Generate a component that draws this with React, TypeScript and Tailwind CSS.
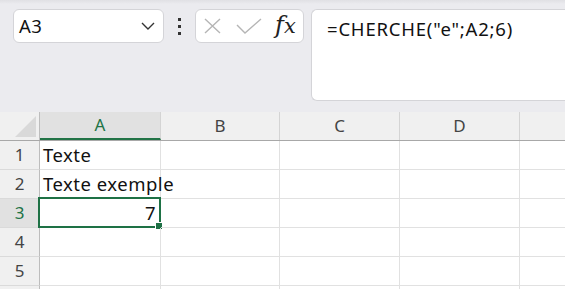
import React from "react";

const font = { fontFamily: '"Noto Sans", "Open Sans", sans-serif' };

const cols = [
  { name: "A", w: "w-[121px]" },
  { name: "B", w: "w-[119px]" },
  { name: "C", w: "w-[120px]" },
  { name: "D", w: "w-[120px]" },
];

const data: Record<number, { text: string; align?: string }> = {
  1: { text: "Texte" },
  2: { text: "Texte exemple" },
  3: { text: "7", align: "right" },
};

export default function App() {
  return (
    <div className="w-[565px] h-[289px] overflow-hidden bg-white" style={font}>
      {/* toolbar */}
      <div className="relative h-[112px] bg-[#ebebef] flex items-start pt-[9px] pl-[13px]">
        <div className="absolute top-0 left-0 right-0 h-[4px] bg-gradient-to-b from-[#e0e0e4] to-[#ebebef]" />
        <div className="w-[151px] h-[34px] bg-white rounded-[6px] border border-[#d4d4d8] flex items-center pl-[5px] pr-[8px] justify-between">
          <span className="text-[18.5px] tracking-[0.5px] text-[#111] leading-none">A3</span>
          <svg width="14" height="8" viewBox="0 0 14 8" fill="none">
            <path d="M1 1 L7 7 L13 1" stroke="#333" strokeWidth="1.4" />
          </svg>
        </div>
        <div className="w-[31px] h-[34px] flex flex-col items-center justify-center gap-[4px]">
          <div className="w-[3px] h-[3px] bg-[#333]" />
          <div className="w-[3px] h-[3px] bg-[#333]" />
          <div className="w-[3px] h-[3px] bg-[#333]" />
        </div>
        <div className="w-[109px] h-[34px] bg-white rounded-[6px] border border-[#d4d4d8] flex items-center pl-[7px]">
          <svg width="19" height="16" viewBox="0 0 19 16" fill="none">
            <path d="M2 1 L17 15 M17 1 L2 15" stroke="#b5b5b5" strokeWidth="1.4" />
          </svg>
          <svg className="ml-[14px]" width="26" height="16" viewBox="0 0 26 16" fill="none">
            <path d="M1 7 L9 15 L25 1" stroke="#b5b5b5" strokeWidth="1.4" />
          </svg>
          <span
            className="ml-[13px] italic text-[#222] leading-none -mt-[3px] whitespace-nowrap"
            style={{ fontFamily: '"DejaVu Serif", "Liberation Serif", serif' }}
          >
            <span className="text-[24px]">f</span>
            <span className="text-[21px]">x</span>
          </span>
        </div>
        <div className="ml-[7px] flex-1 h-[92px] bg-white rounded-l-[6px] border border-r-0 border-[#d4d4d8] pl-[15px] pt-[9px] text-[18.5px] tracking-[0.8px] leading-[20px] text-[#111] whitespace-nowrap">
          =CHERCHE("e";A2;6)
        </div>
      </div>

      {/* header row */}
      <div className="flex h-[29px] bg-[#f0f0f0] border-b border-[#a8a8a8]">
        <div className="relative w-[40px] h-full border-r border-[#bdbdbd]">
          <svg className="absolute right-[3px] bottom-[3px]" width="21" height="21" viewBox="0 0 21 21">
            <path d="M21 0 L21 21 L0 21 Z" fill="#d9d9d9" />
          </svg>
        </div>
        {cols.map((c) => (
          <div
            key={c.name}
            className={`${c.w} h-full flex items-center justify-center text-[17px] ${
              c.name === "A"
                ? "bg-[#e1e1e1] text-[#217346] border-b-2 border-[#217346] border-r border-r-[#d4d4d4]"
                : "text-[#444] border-r border-[#d4d4d4]"
            }`}
          >
            {c.name}
          </div>
        ))}
        <div className="flex-1" />
      </div>

      {/* rows */}
      {[1, 2, 3, 4, 5, 6].map((r) => (
        <div key={r} className="flex h-[29px]">
          <div
            className={`w-[40px] h-full flex items-center justify-center text-[17px] border-r border-[#bdbdbd] border-b border-b-[#dadada] ${
              r === 3 ? "bg-[#e1e1e1] text-[#217346]" : "bg-[#f0f0f0] text-[#444]"
            }`}
          >
            {r <= 5 ? r : ""}
          </div>
          {cols.map((c) => {
            const d = c.name === "A" ? data[r] : undefined;
            const selected = c.name === "A" && r === 3;
            return (
              <div
                key={c.name}
                className={`relative ${c.w} h-full border-r border-b border-[#e1e1e1] flex items-center ${
                  d?.align === "right" ? "justify-end pr-[4px]" : "pl-[3px]"
                }`}
              >
                {d && (
                  <span className="text-[18.5px] tracking-[0.5px] text-[#111] whitespace-nowrap leading-none">
                    {d.text}
                  </span>
                )}
                {selected && (
                  <>
                    <div className="absolute -left-[2px] -top-[2px] -right-[1px] -bottom-[1px] border-2 border-[#1e7145] pointer-events-none" />
                    <div className="absolute -right-[3px] -bottom-[3px] w-[6px] h-[6px] bg-[#1e7145] border border-white box-content" />
                  </>
                )}
              </div>
            );
          })}
          <div className="flex-1 border-b border-[#e1e1e1]" />
        </div>
      ))}
    </div>
  );
}
